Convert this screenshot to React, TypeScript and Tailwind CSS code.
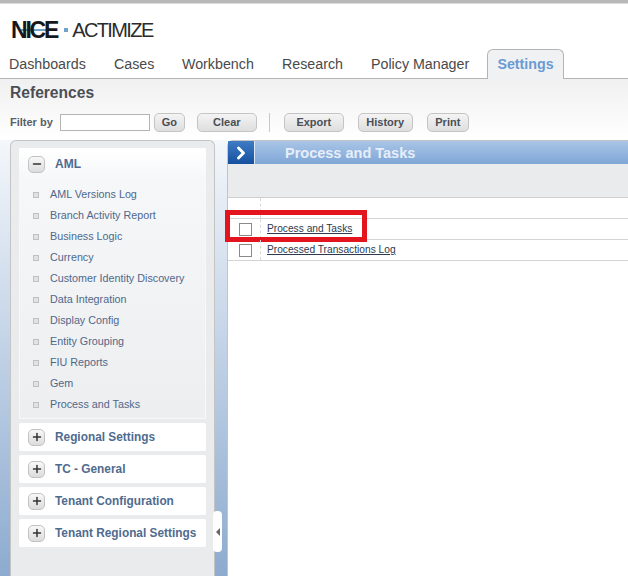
import { ChevronRight, Minus, Plus } from "lucide-react";

const tabs = [
  { label: "Dashboards", cls: "w-[91px] pl-[9px]" },
  { label: "Cases", cls: "w-[82px] pl-[23px]" },
  { label: "Workbench", cls: "w-[100px] pl-[9px]" },
  { label: "Research", cls: "w-[89px] pl-[9px]" },
  { label: "Policy Manager", cls: "w-[122px] pl-[9px]" },
];

const amlItems = [
  "AML Versions Log",
  "Branch Activity Report",
  "Business Logic",
  "Currency",
  "Customer Identity Discovery",
  "Data Integration",
  "Display Config",
  "Entity Grouping",
  "FIU Reports",
  "Gem",
  "Process and Tasks",
];

const groups = ["Regional Settings", "TC - General", "Tenant Configuration", "Tenant Regional Settings"];

const Btn = ({ label, cls }: { label: string; cls: string }) => (
  <button className={`h-[19px] rounded-[5px] border border-[#c4c4c4] bg-gradient-to-b from-[#f4f4f4] to-[#dedede] text-[11px] font-bold leading-none text-[#4a4f55] ${cls}`}>
    {label}
  </button>
);

const Toggle = ({ open }: { open?: boolean }) => (
  <span className="flex h-[17px] w-[17px] items-center justify-center rounded-[5px] border border-[#c2c2c2] bg-gradient-to-b from-[#f8f8f8] to-[#dcdcdc]">
    {open ? <Minus className="h-3 w-3 text-[#333]" strokeWidth={3} /> : <Plus className="h-3 w-3 text-[#333]" strokeWidth={3} />}
  </span>
);

const Row = ({ label, boxed }: { label: string; boxed?: boolean }) => (
  <div className="relative flex h-[21px] items-center border-b border-[#d4d4d4]">
    <div className="flex h-full w-[33px] items-center justify-center border-r border-dashed border-[#d8d8d8] pl-[3px]">
      <span className="h-[13px] w-[13px] border border-[#8a8a8a] bg-white" />
    </div>
    <a className="ml-[6px] pt-[1px] text-[10.2px] leading-none text-[#2d3a4d] underline">{label}</a>
    {boxed && <div className="absolute left-[-3px] top-[-9px] h-[32px] w-[142px] border-[5px] border-[#e4141f]" />}
  </div>
);

const App = () => {
  return (
    <div className="h-[576px] w-[628px] overflow-hidden bg-white" style={{ fontFamily: "'Liberation Sans', Arial, sans-serif" }}>
      <div className="h-[4px] border-t-[3px] border-[#b8b8b8] bg-[#dcdcdc]" />
      <div className="flex h-[45px] items-center pl-[11px] pt-[7px]">
        <span className="relative isolate text-[23px] font-bold leading-none tracking-[-2.2px] text-[#15181c]">
          NICE
          <span className="absolute left-[10px] top-[10px] -z-10 h-[2px] w-[28px] bg-[#6fa3c7]" />
        </span>
        <span className="ml-[7px] mr-[4px] h-[4px] w-[4px] bg-[#6fa3c7]" />
        <span className="text-[20px] leading-none tracking-[-1.6px] text-[#2b2b2b]">ACTIMIZE</span>
      </div>

      <div className="flex h-[30px] items-stretch border-b border-[#b4b4b4] text-[14.25px] text-[#4a4a4a]">
        {tabs.map((t) => (
          <div key={t.label} className={`flex items-center pt-[2px] ${t.cls}`}>
            {t.label}
          </div>
        ))}
        <div className="-mb-px ml-[3px] flex w-[77px] items-center justify-center rounded-t-[6px] border border-b-0 border-[#b4b4b4] bg-[#f0f1f3] pt-[1px] font-bold text-[#6a9bd2]">
          Settings
        </div>
      </div>

      <div className="flex h-[497px] flex-col bg-gradient-to-b from-[#f0f0f1] to-white to-[12%]">
        <div className="h-[30px] pl-[10px] pt-[5px] text-[15.6px] font-bold leading-[18px] text-[#4b4f55]">References</div>
        <div className="flex h-[31px] items-center pb-[4px] pl-[10px]">
          <span className="mr-[7px] text-[11px] font-bold text-[#5a5f66]">Filter by</span>
          <span className="mr-[4px] h-[17px] w-[90px] border border-[#b4b4b4] bg-white" />
          <Btn label="Go" cls="w-[31px]" />
          <Btn label="Clear" cls="ml-[12px] w-[60px]" />
          <span className="ml-[12px] mr-[14px] h-[19px] w-px bg-[#c8c8c8]" />
          <Btn label="Export" cls="w-[60px]" />
          <Btn label="History" cls="ml-[14px] w-[55px]" />
          <Btn label="Print" cls="ml-[14px] w-[42px]" />
        </div>

        <div className="flex min-h-0 flex-1">
          <div className="relative w-[227px] shrink-0 bg-gradient-to-b from-[#f4f7fb] to-[#8dabcf] pl-[10px] pr-[12px]">
            <div className="h-full rounded-t-[6px] border border-b-0 border-[#c4c4c4] bg-[#eaebed] px-[8px] pt-[7px]">
              <div className="bg-gradient-to-b from-white to-[#f6f7f9]">
                <div className="flex h-[32px] items-center pl-[9px]">
                  <Toggle open />
                  <span className="ml-[10px] text-[12px] font-bold text-[#4f6b8f]">AML</span>
                </div>
              </div>
              <div className="h-[239px] border border-t-0 border-[#f7f8fa] bg-gradient-to-b from-[#f6f7f9] to-[#eceef0] pl-[13px] pt-[4px]">
                {amlItems.map((item) => (
                  <div key={item} className="flex h-[21px] items-center">
                    <span className="h-[6px] w-[6px] border border-[#c0c0c0] bg-[#e2e2e2]" />
                    <span className="ml-[11px] text-[10.75px] text-[#50688a]">{item}</span>
                  </div>
                ))}
              </div>
              <div className="mt-[4px] flex flex-col gap-[4px]">
                {groups.map((g) => (
                  <div key={g} className="flex h-[28px] items-center rounded-[2px] bg-white pl-[9px]">
                    <Toggle />
                    <span className="ml-[10px] pt-[2px] text-[11.85px] font-bold text-[#4f6b8f]">{g}</span>
                  </div>
                ))}
              </div>
            </div>
            <div className="absolute left-[213px] top-[371px] flex h-[41px] w-[9px] items-center justify-center rounded-[4px] bg-white">
              <span className="h-0 w-0 border-y-[4px] border-r-[4px] border-y-transparent border-r-[#666]" />
            </div>
          </div>

          <div className="min-w-0 flex-1 rounded-tl-[6px] border-l border-t border-[#c4c4c4] bg-white">
            <div className="flex h-[23px] items-center bg-gradient-to-b from-[#a9c5e6] to-[#7fa6d6]">
              <span className="flex h-[23px] w-[27px] items-center justify-center border-r border-[#dfe9f5] bg-gradient-to-b from-[#3f7cc4] to-[#14509f]">
                <ChevronRight className="h-5 w-5 text-white" strokeWidth={3.5} />
              </span>
              <span className="ml-[30px] pt-[2px] text-[14.5px] font-bold text-[#e6eefa]">Process and Tasks</span>
            </div>
            <div className="h-[34px] border-b border-[#cfcfcf] bg-[#eaebed]" />
            <div className="flex h-[21px] border-b border-[#d4d4d4]">
              <div className="w-[33px] border-r border-dashed border-[#d8d8d8]" />
            </div>
            <Row label="Process and Tasks" boxed />
            <Row label="Processed Transactions Log" />
          </div>
        </div>
      </div>
    </div>
  );
};

export default App;
